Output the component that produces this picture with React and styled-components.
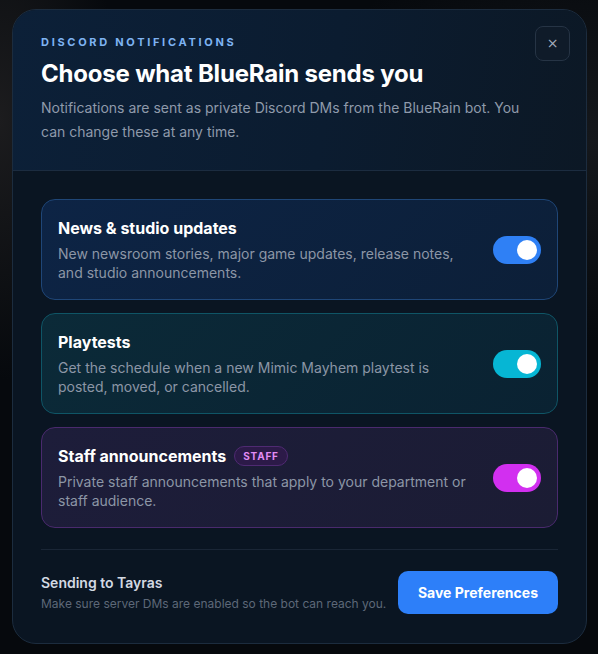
import React, { useState } from "react";
import styled, { createGlobalStyle } from "styled-components";

const GlobalStyle = createGlobalStyle`
  * { box-sizing: border-box; }
  html, body { margin: 0; padding: 0; }
  body {
    background: radial-gradient(ellipse 120px 260px at 0px 120px, #1c1c1e 0%, rgba(20,20,22,0) 100%),
      radial-gradient(ellipse 300px 200px at 590px 140px, #15181c 0%, rgba(10,12,14,0) 100%),
      #06090d;
    min-height: 654px;
    font-family: Inter, "Noto Sans", sans-serif;
  }
`;

const prefs = [
  {
    id: "news",
    title: "News & studio updates",
    text: "New newsroom stories, major game updates, release notes, and studio announcements.",
    tone: "blue",
  },
  {
    id: "playtests",
    title: "Playtests",
    text: "Get the schedule when a new Mimic Mayhem playtest is posted, moved, or cancelled.",
    tone: "teal",
  },
  {
    id: "staff",
    title: "Staff announcements",
    text: "Private staff announcements that apply to your department or staff audience.",
    tone: "purple",
    badge: "STAFF",
  },
];

const tones = {
  blue: {
    bg: "linear-gradient(135deg, #0d2445 0%, #0c1f38 100%)",
    border: "#1f4677",
    on: "#2f80f5",
  },
  teal: {
    bg: "linear-gradient(135deg, #0b2a38 0%, #0a2232 100%)",
    border: "#0f5566",
    on: "#06b6d4",
  },
  purple: {
    bg: "linear-gradient(135deg, #1d1d3a 0%, #1b1c34 100%)",
    border: "#4a2a6e",
    on: "#d22ff0",
  },
};

export default function App() {
  const [enabled, setEnabled] = useState({ news: true, playtests: true, staff: true });

  const toggle = (id) => setEnabled({ ...enabled, [id]: !enabled[id] });

  return (
    <Page>
      <GlobalStyle />
      <Modal>
        <Header>
          <HeaderText>
            <Eyebrow>DISCORD NOTIFICATIONS</Eyebrow>
            <Title>Choose what BlueRain sends you</Title>
            <Intro>
              Notifications are sent as private Discord DMs from the BlueRain bot. You can change
              these at any time.
            </Intro>
          </HeaderText>
          <CloseButton aria-label="Close">×</CloseButton>
        </Header>

        <Body>
          <List>
            {prefs.map((p) => (
              <Card key={p.id} $tone={p.tone}>
                <CardText>
                  <CardTitle>
                    {p.title}
                    {p.badge && <Badge>{p.badge}</Badge>}
                  </CardTitle>
                  <CardDesc>{p.text}</CardDesc>
                </CardText>
                <Toggle
                  $tone={p.tone}
                  $on={enabled[p.id]}
                  onClick={() => toggle(p.id)}
                  aria-pressed={enabled[p.id]}
                >
                  <Knob $on={enabled[p.id]} />
                </Toggle>
              </Card>
            ))}
          </List>

          <Footer>
            <FooterText>
              <Recipient>Sending to Tayras</Recipient>
              <Hint>Make sure server DMs are enabled so the bot can reach you.</Hint>
            </FooterText>
            <SaveButton>Save Preferences</SaveButton>
          </Footer>
        </Body>
      </Modal>
    </Page>
  );
}

const Page = styled.div`
  padding: 9px 11px 12px 12px;
  display: flex;
  justify-content: center;
`;

const Modal = styled.section`
  width: 576px;
  border: 1px solid #1c2c3e;
  border-radius: 24px;
  background: #0a1522;
  overflow: hidden;
`;

const Header = styled.header`
  display: flex;
  justify-content: space-between;
  align-items: flex-start;
  padding: 16px 16px 26px 28px;
  background: linear-gradient(100deg, #0c2038 0%, #0b1c30 55%, #0c1825 100%);
  border-bottom: 1px solid #1c2c40;
`;

const HeaderText = styled.div`
  display: flex;
  flex-direction: column;
  padding-top: 8px;
`;

const Eyebrow = styled.div`
  font-size: 11px;
  font-weight: 700;
  letter-spacing: 2.7px;
  color: #7eb3f2;
  line-height: 16px;
`;

const Title = styled.h1`
  margin: 8px 0 0;
  font-size: 24px;
  font-weight: 700;
  line-height: 32px;
  color: #ffffff;
  letter-spacing: -0.2px;
`;

const Intro = styled.p`
  margin: 6px 0 0;
  font-size: 14px;
  line-height: 24px;
  color: #8f9aab;
  max-width: 500px;
`;

const CloseButton = styled.button`
  width: 35px;
  height: 35px;
  flex-shrink: 0;
  border-radius: 8px;
  border: 1px solid #263445;
  background: #0f1b29;
  color: #a3adbb;
  font-size: 14px;
  font-family: "DejaVu Sans", sans-serif;
  line-height: 1;
  display: flex;
  align-items: center;
  justify-content: center;
  padding: 0 0 1px;
  cursor: pointer;
`;

const Body = styled.div`
  padding: 28px 28px 29px;
`;

const List = styled.div`
  display: flex;
  flex-direction: column;
  gap: 13px;
`;

const Card = styled.div`
  display: flex;
  align-items: center;
  justify-content: space-between;
  gap: 24px;
  min-height: 101px;
  padding: 16px;
  border-radius: 14px;
  border: 1px solid ${({ $tone }) => tones[$tone].border};
  background: ${({ $tone }) => tones[$tone].bg};
`;

const CardText = styled.div`
  display: flex;
  flex-direction: column;
  max-width: 420px;
`;

const CardTitle = styled.div`
  display: flex;
  align-items: center;
  gap: 8px;
  font-size: 16px;
  font-weight: 700;
  line-height: 22px;
  color: #ffffff;
`;

const Badge = styled.span`
  font-size: 10px;
  font-weight: 700;
  letter-spacing: 0.8px;
  color: #e28cf5;
  background: #2c1a48;
  border: 1px solid #4f2a72;
  border-radius: 999px;
  padding: 3px 8px;
  line-height: 12px;
`;

const CardDesc = styled.p`
  margin: 5px 0 0;
  font-size: 14px;
  line-height: 19px;
  color: #8c96a6;
`;

const Toggle = styled.button`
  width: 48px;
  height: 28px;
  flex-shrink: 0;
  border: none;
  border-radius: 999px;
  padding: 4px;
  display: flex;
  justify-content: ${({ $on }) => ($on ? "flex-end" : "flex-start")};
  align-items: center;
  background: ${({ $on, $tone }) => ($on ? tones[$tone].on : "#2a3546")};
  cursor: pointer;
`;

const Knob = styled.span`
  width: 20px;
  height: 20px;
  border-radius: 50%;
  background: #ffffff;
`;

const Footer = styled.div`
  margin-top: 21px;
  padding-top: 21px;
  border-top: 1px solid #1a2636;
  display: flex;
  align-items: center;
  justify-content: space-between;
`;

const FooterText = styled.div`
  display: flex;
  flex-direction: column;
  gap: 3px;
`;

const Recipient = styled.div`
  font-size: 14px;
  font-weight: 600;
  color: #d3d9e2;
  line-height: 20px;
`;

const Hint = styled.div`
  font-size: 12px;
  color: #5d6878;
  line-height: 16px;
`;

const SaveButton = styled.button`
  height: 43px;
  padding: 0 20px;
  border: none;
  border-radius: 10px;
  background: #2d7ff9;
  color: #ffffff;
  font-family: Inter, sans-serif;
  font-size: 14px;
  font-weight: 700;
  cursor: pointer;
`;
